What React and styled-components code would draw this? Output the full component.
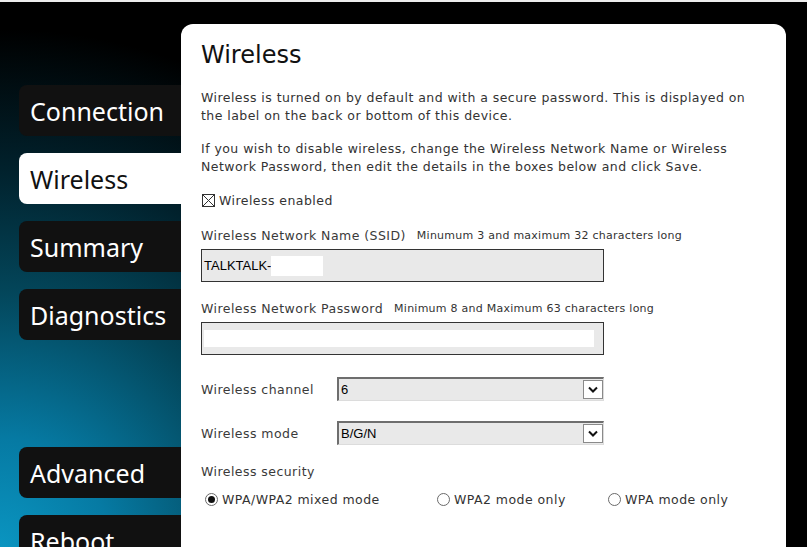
import React from 'react'
import styled, { createGlobalStyle } from 'styled-components'

const GlobalStyle = createGlobalStyle`
  html, body {
    margin: 0;
    padding: 0;
    background: #000;
  }
  body {
    font-family: 'DejaVu Sans', Verdana, sans-serif;
  }
`

const Page = styled.div`
  width: 807px;
  height: 547px;
  overflow: hidden;
  box-sizing: border-box;
  border-top: 2px solid #ececec;
  display: flex;
  align-items: flex-start;
  background: radial-gradient(
    circle at 0 547px,
    #0a95c1 0px,
    #067aa3 110px,
    #034559 260px,
    #01212c 380px,
    #000 520px
  );
`

const Sidebar = styled.nav`
  width: 181px;
  flex-shrink: 0;
  box-sizing: border-box;
  padding: 83px 0 0 19px;
  display: flex;
  flex-direction: column;
`

const NavTab = styled.div`
  height: 51px;
  margin-bottom: 17px;
  box-sizing: border-box;
  padding-left: 11px;
  display: flex;
  align-items: center;
  border-radius: 8px 0 0 8px;
  background: ${p => (p.$active ? '#fff' : '#111')};
  color: ${p => (p.$active ? '#111' : '#fff')};
  font-family: 'Noto Sans', sans-serif;
  font-size: 25px;
`

const NavGap = styled.div`
  height: 90px;
`

const Panel = styled.main`
  margin-top: 22px;
  width: 605px;
  height: 600px;
  flex-shrink: 0;
  box-sizing: border-box;
  padding: 17px 0 0 20px;
  background: #fff;
  border-radius: 12px 12px 0 0;
  color: #333;
`

const Title = styled.h1`
  margin: 0;
  font-size: 24px;
  line-height: 28px;
  font-weight: normal;
  color: #111;
`

const Para = styled.p`
  margin: ${p => p.$top}px 0 0;
  font-size: 12.5px;
  letter-spacing: 0.45px;
  line-height: 18px;
`

const CheckRow = styled.label`
  margin-top: 15px;
  height: 18px;
  display: flex;
  align-items: center;
  gap: 4px;
  font-size: 12.5px;
  letter-spacing: 0.45px;
`

const CheckBox = styled.span`
  width: 13px;
  height: 13px;
  box-sizing: border-box;
  border: 1px solid #333;
  margin-left: 1px;
  display: flex;
  background: #fff;
`

const FieldLabel = styled.div`
  margin-top: ${p => p.$top}px;
  height: 18px;
  display: flex;
  align-items: center;
  font-size: 12.5px;
  letter-spacing: 0.45px;
  color: #3a3a3a;
`

const Hint = styled.span`
  margin-left: 11px;
  font-size: 11px;
  letter-spacing: 0.25px;
  color: #333;
`

const TextBox = styled.div`
  margin-top: 5px;
  width: 403px;
  height: 33px;
  box-sizing: border-box;
  border: 1px solid #333;
  background: #e9e9e9;
  padding: 0 0 0 2px;
  display: flex;
  align-items: center;
  font-family: 'Liberation Sans', Arial, sans-serif;
  font-size: 13px;
  color: #000;
`

const Redact = styled.span`
  display: inline-block;
  width: ${p => p.$w}px;
  height: ${p => p.$h}px;
  background: #fff;
`

const SelectRow = styled.div`
  margin-top: ${p => p.$top}px;
  display: flex;
  align-items: center;
`

const SelectLabel = styled.span`
  width: 136px;
  font-size: 12.5px;
  letter-spacing: 0.45px;
  color: #3a3a3a;
`

const Select = styled.div`
  width: 267px;
  height: 24px;
  box-sizing: border-box;
  border-top: 2px solid #6e6e6e;
  border-left: 2px solid #6e6e6e;
  border-right: 1px solid #dcdcdc;
  border-bottom: 1px solid #dcdcdc;
  background: #e9e9e9;
  padding-left: 2px;
  display: flex;
  align-items: center;
  justify-content: space-between;
  font-family: 'Liberation Sans', Arial, sans-serif;
  font-size: 13px;
  color: #000;
`

const ArrowButton = styled.span`
  width: 20px;
  height: 19px;
  box-sizing: border-box;
  border: 1px solid #8a8a8a;
  background: #fff;
  display: flex;
  align-items: center;
  justify-content: center;
`

const RadioRow = styled.div`
  margin-top: 10px;
  padding-left: 4px;
  display: grid;
  grid-template-columns: 232px 171px auto;
  font-size: 12.5px;
  letter-spacing: 0.45px;
  color: #333;
`

const RadioOption = styled.label`
  height: 18px;
  display: flex;
  align-items: center;
  gap: 4px;
`

const RadioCircle = styled.span`
  width: 13px;
  height: 13px;
  box-sizing: border-box;
  border: 1px solid #6a6a6a;
  border-radius: 50%;
  display: flex;
  align-items: center;
  justify-content: center;

  &::after {
    content: '';
    width: 7px;
    height: 7px;
    border-radius: 50%;
    background: ${p => (p.$checked ? '#111' : 'transparent')};
  }
`

const Chevron = () => (
  <svg width="10" height="7" viewBox="0 0 10 7">
    <path d="M1 1.5 L5 5.5 L9 1.5" fill="none" stroke="#111" strokeWidth="2" />
  </svg>
)

const Cross = () => (
  <svg width="11" height="11" viewBox="0 0 11 11">
    <path d="M0 0 L11 11 M11 0 L0 11" stroke="#333" strokeWidth="1" />
  </svg>
)

const navTop = ['Connection', 'Wireless', 'Summary', 'Diagnostics']
const navBottom = ['Advanced', 'Reboot']

const App = () => (
  <>
    <GlobalStyle />
    <Page>
      <Sidebar>
        {navTop.map(item => (
          <NavTab key={item} $active={item === 'Wireless'}>{item}</NavTab>
        ))}
        <NavGap />
        {navBottom.map(item => (
          <NavTab key={item}>{item}</NavTab>
        ))}
      </Sidebar>

      <Panel>
        <Title>Wireless</Title>
        <Para $top={20}>
          Wireless is turned on by default and with a secure password. This is displayed on
          <br />
          the label on the back or bottom of this device.
        </Para>
        <Para $top={15}>
          If you wish to disable wireless, change the Wireless Network Name or Wireless
          <br />
          Network Password, then edit the details in the boxes below and click Save.
        </Para>

        <CheckRow>
          <CheckBox><Cross /></CheckBox>
          Wireless enabled
        </CheckRow>

        <FieldLabel $top={17}>
          Wireless Network Name (SSID)
          <Hint>Minumum 3 and maximum 32 characters long</Hint>
        </FieldLabel>
        <TextBox>
          TALKTALK-
          <Redact $w={52} $h={20} />
        </TextBox>

        <FieldLabel $top={17}>
          Wireless Network Password
          <Hint>Minimum 8 and Maximum 63 characters long</Hint>
        </FieldLabel>
        <TextBox>
          <Redact $w={390} $h={17} />
        </TextBox>

        <SelectRow $top={22}>
          <SelectLabel>Wireless channel</SelectLabel>
          <Select>
            6
            <ArrowButton><Chevron /></ArrowButton>
          </Select>
        </SelectRow>

        <SelectRow $top={20}>
          <SelectLabel>Wireless mode</SelectLabel>
          <Select>
            B/G/N
            <ArrowButton><Chevron /></ArrowButton>
          </Select>
        </SelectRow>

        <FieldLabel $top={17}>Wireless security</FieldLabel>
        <RadioRow>
          <RadioOption><RadioCircle $checked />WPA/WPA2 mixed mode</RadioOption>
          <RadioOption><RadioCircle />WPA2 mode only</RadioOption>
          <RadioOption><RadioCircle />WPA mode only</RadioOption>
        </RadioRow>
      </Panel>
    </Page>
  </>
)

export default App
